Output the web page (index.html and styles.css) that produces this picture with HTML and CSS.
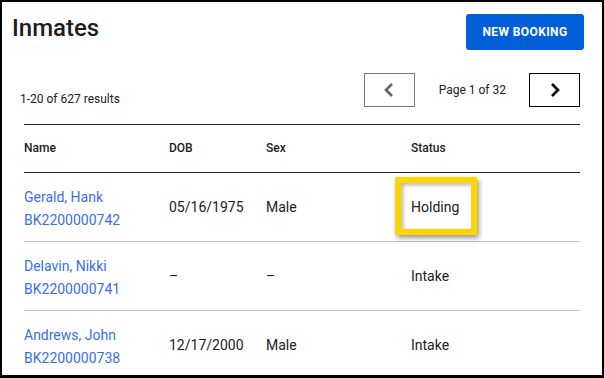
FILE: index.html
```html
<!DOCTYPE html>
<html lang="en">
<head>
    <meta charset="UTF-8">
    <meta name="viewport" content="width=device-width, initial-scale=1.0">
    <title>Inmates</title>
    <link rel="stylesheet" href="styles.css">
</head>
<body>
    <div class="header">
        <h1>Inmates</h1>
        <button class="primary-button">New Booking</button>
    </div>

    <div class="toolbar">
        <p class="results">1-20 of 627 results</p>
        <div class="pager">
            <button class="page-button prev" aria-label="Previous page">
                <svg width="24" height="24" viewBox="0 0 24 24"><path d="M15 6l-6 6 6 6" fill="none" stroke="currentColor" stroke-width="2.6"/></svg>
            </button>
            <span class="page-label">Page 1 of 32</span>
            <button class="page-button next" aria-label="Next page">
                <svg width="24" height="24" viewBox="0 0 24 24"><path d="M9 6l6 6-6 6" fill="none" stroke="currentColor" stroke-width="2.6"/></svg>
            </button>
        </div>
    </div>

    <div class="table">
        <div class="row head">
            <div>Name</div>
            <div>DOB</div>
            <div>Sex</div>
            <div>Status</div>
        </div>
        <div class="row">
            <div class="name-cell">
                <a href="#">Gerald, Hank</a>
                <a href="#">BK2200000742</a>
            </div>
            <div>05/16/1975</div>
            <div>Male</div>
            <div><span class="highlight">Holding</span></div>
        </div>
        <div class="row">
            <div class="name-cell">
                <a href="#">Delavin, Nikki</a>
                <a href="#">BK2200000741</a>
            </div>
            <div>&ndash;</div>
            <div>&ndash;</div>
            <div>Intake</div>
        </div>
        <div class="row">
            <div class="name-cell">
                <a href="#">Andrews, John</a>
                <a href="#">BK2200000738</a>
            </div>
            <div>12/17/2000</div>
            <div>Male</div>
            <div>Intake</div>
        </div>
    </div>
</body>
</html>
```

FILE: styles.css
```css
/* Basic Reset */
* {
    margin: 0;
    padding: 0;
    box-sizing: border-box;
}

body {
    font-family: Roboto, 'Liberation Sans', sans-serif;
    color: #212121;
    background-color: #ffffff;
    border: 2px solid #000000;
    border-bottom-width: 3px;
    height: 378px;
    overflow: hidden;
}

.header {
    display: flex;
    justify-content: space-between;
    align-items: flex-start;
    padding: 12px 18px 0 10px;
}

h1 {
    font-size: 24px;
    font-weight: 500;
    line-height: 28px;
    color: #1c1c1c;
}

.primary-button {
    width: 118px;
    height: 36px;
    background-color: #005fd6;
    color: #ffffff;
    border: none;
    border-radius: 3px;
    font-family: inherit;
    font-size: 12px;
    font-weight: 700;
    letter-spacing: 0.4px;
    text-transform: uppercase;
    cursor: pointer;
}

.toolbar {
    display: flex;
    justify-content: space-between;
    align-items: flex-end;
    margin-top: 23px;
    padding: 0 22px 0 18px;
}

.results {
    font-size: 12px;
    line-height: 16px;
}

.pager {
    display: flex;
    align-items: center;
}

.page-label {
    font-size: 12px;
    line-height: 16px;
    margin: 0 23px 0 24px;
}

.page-button {
    width: 51px;
    height: 34px;
    background-color: #ffffff;
    display: flex;
    align-items: center;
    justify-content: center;
    cursor: pointer;
}

.page-button.prev {
    border: 1px solid #777777;
    color: #666666;
}

.page-button.next {
    border: 1px solid #000000;
    color: #000000;
}

.page-button svg {
    display: block;
}

/* Table */
.table {
    margin: 17px 22px 0 22px;
    border-top: 1px solid #222222;
}

.row {
    display: grid;
    grid-template-columns: 145px 97px 145px 1fr;
    align-items: center;
    font-size: 14px;
    line-height: 23px;
    border-bottom: 1px solid #c8c8c8;
}

.row.head {
    font-size: 12px;
    font-weight: 500;
    line-height: 16px;
    padding: 15px 0 16px;
    border-bottom-color: #222222;
}

.name-cell {
    display: flex;
    flex-direction: column;
    padding: 13px 0 9px;
}

.name-cell a {
    color: #3a6ee8;
    text-decoration: none;
}

/* Yellow call-out drawn over the status */
.highlight {
    position: relative;
    display: inline-block;
}

.highlight::before {
    content: "";
    position: absolute;
    top: -19px;
    bottom: -16px;
    left: -16px;
    right: -18px;
    border: 6px solid #ffd400;
    box-shadow: 2px 3px 5px rgba(0, 0, 0, 0.4), inset 2px 2px 4px rgba(0, 0, 0, 0.3);
}
```
